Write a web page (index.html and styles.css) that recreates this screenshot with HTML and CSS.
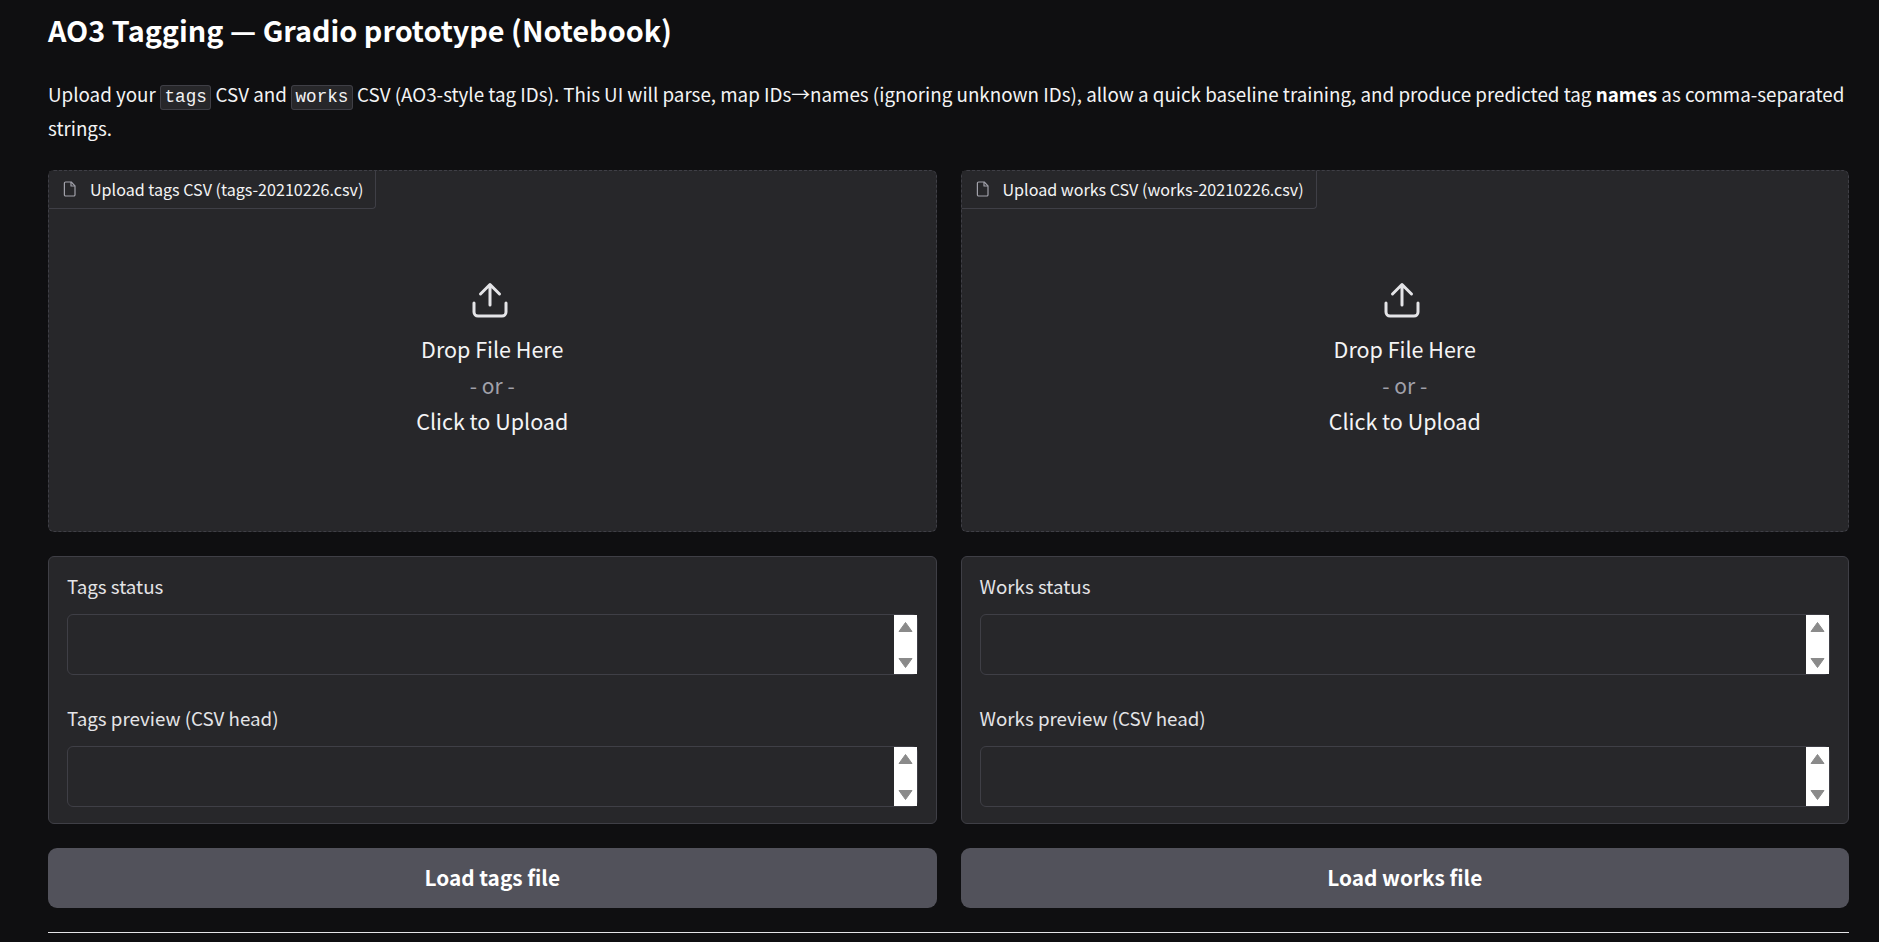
FILE: index.html
```html
<!DOCTYPE html>
<html lang="en">
<head>
<meta charset="utf-8">
<title>AO3 Tagging — Gradio prototype (Notebook)</title>
<link rel="stylesheet" href="styles.css">
</head>
<body>
<main class="page">
  <h1 class="title">AO3 Tagging — Gradio prototype (Notebook)</h1>
  <p class="intro">Upload your <code>tags</code> CSV and <code>works</code> CSV (AO3-style tag IDs). This UI will parse, map IDs→names (ignoring unknown IDs), allow a quick baseline training, and produce predicted tag <strong>names</strong> as comma-separated strings.</p>
  <div class="grid">
    <section class="upload">
      <div class="tab"><svg class="file-icon" viewBox="0 0 14 16" fill="none" stroke="currentColor" stroke-width="1.2" stroke-linejoin="round"><path d="M2.600 1h5.600L12 4.800v9a1.200 1.200 0 0 1-1.200 1.200H2.600a1.200 1.200 0 0 1-1.200-1.200V2.200A1.200 1.200 0 0 1 2.600 1z"/><path d="M8 1v4h4"/></svg><span>Upload tags CSV (tags-20210226.csv)</span></div>
      <div class="drop">
        <svg class="up-icon" viewBox="0 0 36 36" fill="none" stroke="currentColor" stroke-width="3" stroke-linecap="round" stroke-linejoin="round"><path d="M18 23V2.500M8.500 12 18 2.500l9.500 9.500"/><path d="M2 21v9a4 4 0 0 0 4 4h24a4 4 0 0 0 4-4v-9"/></svg>
        <div class="drop-line">Drop File Here</div>
        <div class="drop-or">- or -</div>
        <div class="drop-line">Click to Upload</div>
      </div>
    </section>
    <section class="upload">
      <div class="tab"><svg class="file-icon" viewBox="0 0 14 16" fill="none" stroke="currentColor" stroke-width="1.2" stroke-linejoin="round"><path d="M2.600 1h5.600L12 4.800v9a1.200 1.200 0 0 1-1.200 1.200H2.600a1.200 1.200 0 0 1-1.200-1.200V2.200A1.200 1.200 0 0 1 2.600 1z"/><path d="M8 1v4h4"/></svg><span>Upload works CSV (works-20210226.csv)</span></div>
      <div class="drop">
        <svg class="up-icon" viewBox="0 0 36 36" fill="none" stroke="currentColor" stroke-width="3" stroke-linecap="round" stroke-linejoin="round"><path d="M18 23V2.500M8.500 12 18 2.500l9.500 9.500"/><path d="M2 21v9a4 4 0 0 0 4 4h24a4 4 0 0 0 4-4v-9"/></svg>
        <div class="drop-line">Drop File Here</div>
        <div class="drop-or">- or -</div>
        <div class="drop-line">Click to Upload</div>
      </div>
    </section>

    <section class="panel">
      <div class="field">
        <div class="label">Tags status</div>
        <div class="box"><div class="scrollbar"><svg class="arrow" viewBox="0 0 15 12"><path d="M7.500 1.500 14 10.500H1z"/></svg><svg class="arrow" viewBox="0 0 15 12"><path d="M1 1.500h13L7.500 10.500z"/></svg></div></div>
      </div>
      <div class="field">
        <div class="label">Tags preview (CSV head)</div>
        <div class="box"><div class="scrollbar"><svg class="arrow" viewBox="0 0 15 12"><path d="M7.500 1.500 14 10.500H1z"/></svg><svg class="arrow" viewBox="0 0 15 12"><path d="M1 1.500h13L7.500 10.500z"/></svg></div></div>
      </div>
    </section>
    <section class="panel">
      <div class="field">
        <div class="label">Works status</div>
        <div class="box"><div class="scrollbar"><svg class="arrow" viewBox="0 0 15 12"><path d="M7.500 1.500 14 10.500H1z"/></svg><svg class="arrow" viewBox="0 0 15 12"><path d="M1 1.500h13L7.500 10.500z"/></svg></div></div>
      </div>
      <div class="field">
        <div class="label">Works preview (CSV head)</div>
        <div class="box"><div class="scrollbar"><svg class="arrow" viewBox="0 0 15 12"><path d="M7.500 1.500 14 10.500H1z"/></svg><svg class="arrow" viewBox="0 0 15 12"><path d="M1 1.500h13L7.500 10.500z"/></svg></div></div>
      </div>
    </section>

    <button class="btn">Load tags file</button>
    <button class="btn">Load works file</button>
  </div>
  <hr class="rule">
</main>
</body>
</html>
```

FILE: styles.css
```css
html, body {
  margin: 0;
  height: 942px;
  overflow: hidden;
  background: #0f0f11;
}
body {
  color: #f4f4f5;
  font-family: "Noto Sans CJK SC", "Noto Sans", sans-serif;
}
.page {
  padding: 0 30px 0 48px;
}
.title {
  margin: 0;
  padding-top: 9px;
  font-size: 28.800px;
  line-height: 42px;
  font-weight: 600;
  color: #fff;
}
.intro {
  margin: 26px 0 0;
  font-size: 18.800px;
  line-height: 33.500px;
  color: #f4f4f5;
}
.intro strong { font-weight: 700; color: #fff; }
.intro code {
  font-family: "Liberation Mono", monospace;
  font-size: 17.600px;
  line-height: 1;
  padding: 1px 3.500px 2px;
  background: #27272a;
  border: 1px solid #3f3f46;
  border-radius: 3px;
}
.grid {
  margin-top: 26px;
  display: grid;
  grid-template-columns: 1fr 1fr;
  grid-template-rows: 362px 268px 60px;
  gap: 24px;
}
.upload {
  display: flex;
  flex-direction: column;
  background: #27272a;
  border: 1px dashed #3f3f46;
  border-radius: 6px;
  box-sizing: border-box;
}
.tab {
  align-self: flex-start;
  display: flex;
  align-items: center;
  gap: 13px;
  height: 35px;
  padding: 0 12px 2px 14px;
  background: #27272a;
  border-right: 1px solid #3f3f46;
  border-bottom: 1px solid #3f3f46;
  border-bottom-right-radius: 4px;
  font-size: 16.100px;
  color: #f4f4f5;
}
.file-icon { width: 14px; height: 16px; color: #a1a1aa; }
.drop {
  flex: 1;
  display: flex;
  flex-direction: column;
  align-items: center;
  justify-content: center;
  padding-bottom: 19px;
}
.up-icon { width: 36px; height: 36px; color: #e4e4e7; margin: 0 5px 13px 0; }
.drop-line { font-size: 21.500px; line-height: 36px; color: #f4f4f5; }
.drop-or { font-size: 21px; line-height: 36px; color: #a1a1aa; }
.panel {
  display: flex;
  flex-direction: column;
  gap: 27px;
  padding: 13px 18px 15px;
  background: #27272a;
  border: 1px solid #3f3f46;
  border-radius: 6px;
  box-sizing: border-box;
}
.field { display: flex; flex-direction: column; gap: 12px; }
.label { font-size: 18.750px; line-height: 32px; color: #e4e4e7; }
.box {
  height: 61px;
  display: flex;
  justify-content: flex-end;
  box-sizing: border-box;
  border: 1px solid #3f3f46;
  border-radius: 6px;
  background: #27272a;
}
.scrollbar {
  width: 23px;
  padding: 6px 0 5px;
  box-sizing: border-box;
  background: #fff;
  display: flex;
  flex-direction: column;
  justify-content: space-between;
  align-items: center;
}
.arrow { width: 15px; height: 12px; fill: #8a8a8a; stroke: #8a8a8a; stroke-width: 1; stroke-linejoin: round; }
.btn {
  border: 0;
  border-radius: 9px;
  padding: 0 0 2px;
  background: #52525b;
  color: #fff;
  font-family: inherit;
  font-size: 20.800px;
  font-weight: 600;
}
.rule {
  margin: 24px 0 0;
  border: 0;
  border-top: 1px solid #e4e4e7;
}
```
